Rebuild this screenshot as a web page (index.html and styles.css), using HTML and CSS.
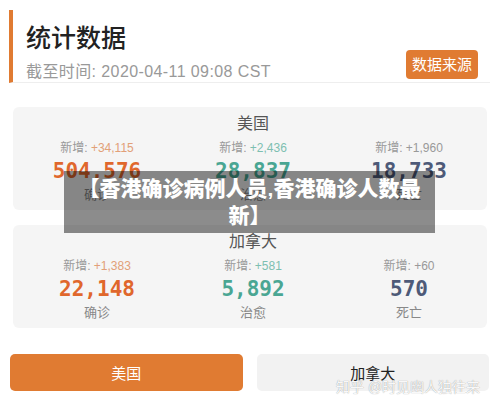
FILE: index.html
```html
<!DOCTYPE html>
<html lang="zh-CN">
<head>
  <meta charset="UTF-8">
  <meta name="viewport" content="width=device-width, initial-scale=1.0">
  <title>统计数据</title>
  <link rel="stylesheet" href="styles.css">
</head>
<body>
  <div class="header">
    <div class="header-text">
      <h1>统计数据</h1>
      <p class="time">截至时间: 2020-04-11 09:08 CST</p>
    </div>
    <a class="source">数据来源</a>
  </div>

  <div class="card">
    <h2>美国</h2>
    <div class="stats">
      <div class="stat confirmed">
        <p class="add">新增: <span>+34,115</span></p>
        <p class="num">504,576</p>
        <p class="label">确诊</p>
      </div>
      <div class="stat cured">
        <p class="add">新增: <span>+2,436</span></p>
        <p class="num">28,837</p>
        <p class="label">治愈</p>
      </div>
      <div class="stat dead">
        <p class="add">新增: <span>+1,960</span></p>
        <p class="num">18,733</p>
        <p class="label">死亡</p>
      </div>
    </div>
  </div>

  <div class="card">
    <h2>加拿大</h2>
    <div class="stats">
      <div class="stat confirmed">
        <p class="add">新增: <span>+1,383</span></p>
        <p class="num">22,148</p>
        <p class="label">确诊</p>
      </div>
      <div class="stat cured">
        <p class="add">新增: <span>+581</span></p>
        <p class="num">5,892</p>
        <p class="label">治愈</p>
      </div>
      <div class="stat dead">
        <p class="add">新增: <span>+60</span></p>
        <p class="num">570</p>
        <p class="label">死亡</p>
      </div>
    </div>
  </div>

  <div class="tabs">
    <button class="tab active">美国</button>
    <button class="tab">加拿大</button>
  </div>

  <div class="caption">【香港确诊病例人员,香港确诊人数最<br>新】</div>
  <div class="watermark">知乎 @时见幽人独往来</div>
</body>
</html>
```

FILE: styles.css
```css
/* Reset */
* {
  margin: 0;
  padding: 0;
  box-sizing: border-box;
  font-family: "Liberation Sans", "Noto Sans CJK SC", sans-serif;
}

body {
  background: #fff;
  width: 500px;
  height: 406px;
  overflow: hidden;
  position: relative;
}

.header {
  margin: 10px 10px 0 9px;
  height: 73px;
  border-left: 4px solid #e07b32;
  border-bottom: 1px solid #eee;
  padding: 6px 12px 0 13px;
  display: flex;
  justify-content: space-between;
  align-items: flex-end;
}

h1 {
  font-size: 25px;
  line-height: 34px;
  font-weight: 500;
  color: #222;
}

.time {
  margin-top: 7px;
  font-size: 16px;
  letter-spacing: 0.4px;
  line-height: 20px;
  color: #999;
}

.source {
  margin-bottom: 3px;
  height: 29px;
  padding: 0 6px;
  background: #e07b32;
  color: #fff;
  border-radius: 4px;
  font-size: 15px;
  line-height: 29px;
}

.card {
  margin: 24px 13px 0;
  background: #f5f5f5;
  border-radius: 6px;
  padding: 7px 0 6px 6px;
  text-align: center;
}

.card + .card {
  margin-top: 15px;
}

h2 {
  font-size: 16px;
  line-height: 20px;
  font-weight: normal;
  color: #555;
}

.stats {
  margin-top: 6px;
  display: grid;
  grid-template-columns: repeat(3, 1fr);
}

.add {
  font-size: 12px;
  line-height: 16px;
  color: #999;
}

.num {
  margin-top: 2px;
  font-family: "DejaVu Sans Mono", monospace;
  font-size: 21px;
  line-height: 26px;
  font-weight: bold;
}

.label {
  margin-top: 2px;
  font-size: 13px;
  line-height: 18px;
  color: #888;
}

.confirmed .num { color: #e0672c; }
.confirmed .add span { color: #e2a078; }
.cured .num { color: #4aa693; }
.cured .add span { color: #7dbfb1; }
.dead .num { color: #4e5a78; }

.tabs {
  margin-top: 26px;
  padding: 0 11px 0 10px;
  display: grid;
  grid-template-columns: 1fr 1fr;
  gap: 14px;
}

.tab {
  height: 37px;
  border: none;
  border-radius: 5px;
  background: #f2f2f2;
  color: #222;
  font-size: 15px;
  font-family: "Liberation Sans", "Noto Sans CJK SC", sans-serif;
}

.tab.active {
  background: #e07b32;
  color: #fff;
}

/* overlays */
.caption {
  position: absolute;
  left: 64px;
  top: 171px;
  width: 371px;
  padding: 4px 0;
  background: rgba(0, 0, 0, 0.45);
  color: #fff;
  font-size: 21px;
  line-height: 27px;
  font-weight: 900;
  text-align: center;
}

.watermark {
  position: absolute;
  left: 336px;
  top: 378px;
  font-size: 14px;
  line-height: 18px;
  color: rgba(255, 255, 255, 0.95);
  text-shadow: 0 0 1px rgba(0, 0, 0, 0.45);
}
```
